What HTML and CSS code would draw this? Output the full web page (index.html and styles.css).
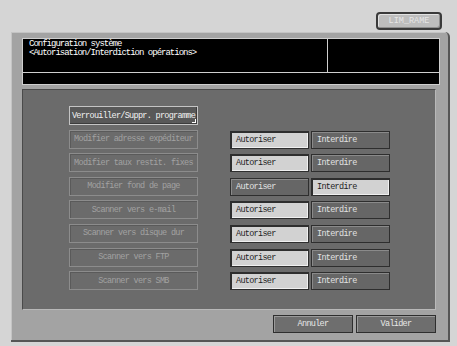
FILE: index.html
```html
<!DOCTYPE html>
<html lang="fr">
<head>
  <meta charset="UTF-8">
  <title>Autorisation/Interdiction opérations</title>
  <link rel="stylesheet" href="styles.css">
</head>
<body>
  <div class="topbar">
    <button class="tab-btn" disabled>LIM_RAME</button>
  </div>

  <div class="panel">
    <!-- En-tête -->
    <div class="header">
      <div class="header-row">
        <div class="title">Configuration système<br>&lt;Autorisation/Interdiction opérations&gt;</div>
        <div class="title-side"></div>
      </div>
      <div class="header-bar"></div>
    </div>

    <!-- Liste des opérations -->
    <div class="inner">
      <div class="row">
        <button class="op op-active">Verrouiller/Suppr. programme</button>
      </div>
      <div class="row">
        <button class="op">Modifier adresse expéditeur</button>
        <div class="choice"><span class="opt on">Autoriser</span><span class="opt">Interdire</span></div>
      </div>
      <div class="row">
        <button class="op">Modifier taux restit. fixes</button>
        <div class="choice"><span class="opt on">Autoriser</span><span class="opt">Interdire</span></div>
      </div>
      <div class="row">
        <button class="op">Modifier fond de page</button>
        <div class="choice"><span class="opt">Autoriser</span><span class="opt on">Interdire</span></div>
      </div>
      <div class="row">
        <button class="op">Scanner vers e-mail</button>
        <div class="choice"><span class="opt on">Autoriser</span><span class="opt">Interdire</span></div>
      </div>
      <div class="row">
        <button class="op">Scanner vers disque dur</button>
        <div class="choice"><span class="opt on">Autoriser</span><span class="opt">Interdire</span></div>
      </div>
      <div class="row">
        <button class="op">Scanner vers FTP</button>
        <div class="choice"><span class="opt on">Autoriser</span><span class="opt">Interdire</span></div>
      </div>
      <div class="row">
        <button class="op">Scanner vers SMB</button>
        <div class="choice"><span class="opt on">Autoriser</span><span class="opt">Interdire</span></div>
      </div>
    </div>

    <!-- Pied -->
    <div class="footer">
      <button class="foot-btn">Annuler</button>
      <button class="foot-btn">Valider</button>
    </div>
  </div>
</body>
</html>
```

FILE: styles.css
```css
:root {
  --page-bg: #d5d5d5;
  --panel-bg: #a3a3a3;
  --inner-bg: #6b6b6b;
  --light-line: #cfcfcf;
  --dark-line: #2e2e2e;
}

* {
  margin: 0;
  padding: 0;
  box-sizing: border-box;
  font-family: 'Liberation Mono', 'DejaVu Sans Mono', monospace;
}

body {
  width: 457px;
  height: 346px;
  background: var(--page-bg);
  overflow: hidden;
  font-size: 8.5px;
  letter-spacing: -0.7px;
}

button {
  font: inherit;
  letter-spacing: inherit;
  cursor: pointer;
}

/* Barre du haut */
.topbar {
  height: 32px;
  display: flex;
  justify-content: flex-end;
  align-items: flex-start;
  padding: 12px 15px 0 0;
}

.tab-btn {
  width: 66px;
  height: 18px;
  border: 2px solid #3a3a3a;
  border-radius: 4px;
  background: #bdbdbd;
  color: #e6e6e6;
  box-shadow: inset 1px 1px 0 #e2e2e2, inset -1px -1px 0 #8e8e8e;
  line-height: 12px;
  letter-spacing: 0;
}

/* Panneau principal */
.panel {
  width: 439px;
  height: 310px;
  margin-left: 11px;
  background: var(--panel-bg);
  border-radius: 0 5px 0 0;
  border-right: 2px solid #555;
  border-bottom: 2px solid #555;
  box-shadow: inset 1px 1px 0 #c4c4c4;
  padding: 6px 8px 0 11px;
  display: flex;
  flex-direction: column;
}

.header {
  width: 418px;
  border: 1px solid var(--light-line);
  background: #000;
}

.header-row {
  height: 34px;
  display: flex;
  border-bottom: 1px solid var(--light-line);
}

.title {
  width: 305px;
  border-right: 1px solid var(--light-line);
  color: #fff;
  padding: 1px 0 0 6px;
  line-height: 9px;
  font-size: 9px;
  letter-spacing: -1px;
}

.title-side {
  flex: 1;
}

.header-bar {
  height: 11px;
}

/* Zone des opérations */
.inner {
  width: 414px;
  height: 221px;
  margin-top: 4px;
  background: var(--inner-bg);
  border-top: 1px solid #4a4a4a;
  border-left: 1px solid #4a4a4a;
  border-right: 1px solid #b8b8b8;
  border-bottom: 1px solid #b8b8b8;
  padding: 16px 0 0 46px;
  display: flex;
  flex-direction: column;
  gap: 4.6px;
}

.row {
  display: flex;
  height: 19px;
  gap: 32px;
}

.op {
  width: 129px;
  height: 19px;
  background: var(--inner-bg);
  border: 1px solid #8c8c8c;
  box-shadow: inset 1px 1px 0 #5a5a5a;
  color: #a2a2a2;
  text-align: center;
  white-space: nowrap;
  overflow: hidden;
}

.op-active {
  position: relative;
  background: #585858;
  border: 1px solid #c4c4c4;
  box-shadow: inset -1px -1px 0 #3c3c3c;
  color: #f2f2f2;
}

.op-active::after {
  content: '';
  position: absolute;
  right: 1px;
  bottom: 1px;
  width: 3px;
  height: 3px;
  border-right: 1px solid #fff;
  border-bottom: 1px solid #fff;
}

.choice {
  display: flex;
  gap: 2px;
  padding-top: 1px;
}

.opt {
  width: 79px;
  height: 18px;
  display: flex;
  align-items: center;
  padding-left: 5px;
  background: #666;
  color: #e2e2e2;
  border: 1px solid var(--dark-line);
  box-shadow: inset 1px 1px 0 #8a8a8a;
}

.opt.on {
  background: #d2d2d2;
  color: #1e1e1e;
  border: 1px solid var(--dark-line);
  box-shadow: inset 1px 1px 0 #2e2e2e, inset -1px -1px 0 #f0f0f0;
}

/* Pied de page */
.footer {
  width: 414px;
  display: flex;
  justify-content: flex-end;
  gap: 3px;
  padding-top: 5px;
}

.foot-btn {
  width: 80px;
  height: 18px;
  background: #6e6e6e;
  border: 1px solid var(--dark-line);
  box-shadow: inset 1px 1px 0 #9a9a9a;
  color: #e8e8e8;
}
```
